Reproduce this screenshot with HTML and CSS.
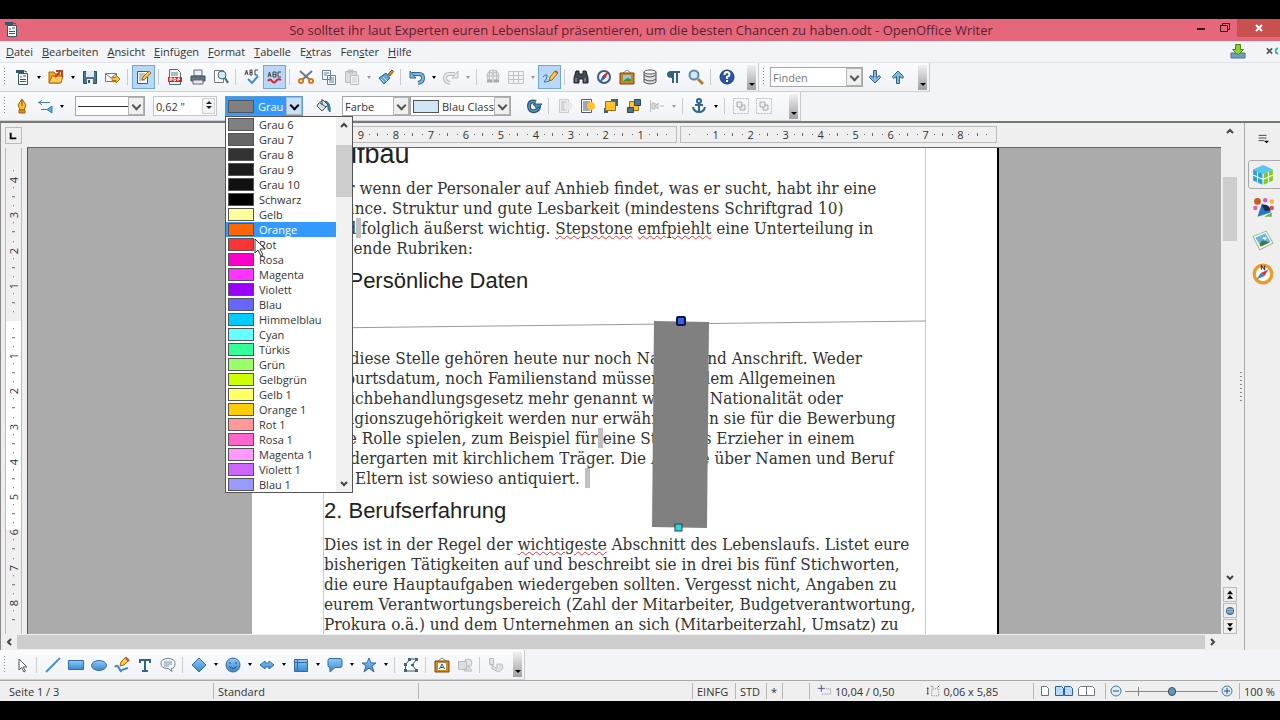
FILE: index.html
```
<!DOCTYPE html>
<html lang="de">

<head>
  <meta charset="utf-8">
  <title>OpenOffice Writer</title>
  <meta name="viewport" content="width=device-width, initial-scale=1.0">
  <link rel="stylesheet" href="styles.css">
</head>

<body>
  <svg class="defs" aria-hidden="true">
    <defs>
      <linearGradient id="blue" x1="0" y1="0" x2="0" y2="1">
        <stop offset="0" stop-color="#8ecbf5" />
        <stop offset="1" stop-color="#3d86cf" />
      </linearGradient>
      <symbol id="doc" viewBox="0 0 16 16">
        <path d="M2 1h8v3H2z" fill="#35566b" />
        <path d="M4.500 4.500h9v11h-9z" fill="#fff" stroke="#35566b" />
        <path d="M3 3q3-2 5 0q2-2 5 0M6 8h2M6 10.500h6M6 12.500h6M9 7h3" stroke="#35566b" fill="none" />
      </symbol>
      <symbol id="rotated" viewBox="0 0 16 16">
        <path d="M.5.500h15v15H.5z" fill="none" stroke="#bbb" stroke-dasharray="2 1" />
        <path d="M4 4h5v5H4zM8 7h4v5H7V9" fill="#eee" stroke="#aaa" />
      </symbol>
    </defs>
  </svg>

  <div class="window">
    <header class="titlebar">
      <svg class="app-icon" viewBox="0 0 16 16"><use href="#doc" /></svg>
      <h1>So solltet ihr laut Experten euren Lebenslauf präsentieren, um die besten Chancen zu haben.odt - OpenOffice Writer</h1>
      <div class="window-buttons">
        <button aria-label="Minimieren"><svg viewBox="0 0 16 16"><path d="M4 9h8" stroke="#3a1820" stroke-width="2" /></svg></button>
        <button aria-label="Verkleinern"><svg viewBox="0 0 16 16"><path d="M3.500 5.500h7v6h-7zM5.500 5V3.500h7v6h-2" fill="none" stroke="#3a1820" /></svg></button>
        <button class="close" aria-label="Schließen"><svg viewBox="0 0 16 16"><path d="M5 5l6 6M11 5l-6 6" stroke="#fff" stroke-width="2" /></svg></button>
      </div>
    </header>

    <nav class="menubar">
      <a href="#"><u>D</u>atei</a>
      <a href="#"><u>B</u>earbeiten</a>
      <a href="#"><u>A</u>nsicht</a>
      <a href="#"><u>E</u>infügen</a>
      <a href="#"><u>F</u>ormat</a>
      <a href="#"><u>T</u>abelle</a>
      <a href="#">E<u>x</u>tras</a>
      <a href="#">Fen<u>s</u>ter</a>
      <a href="#"><u>H</u>ilfe</a>
      <span class="spacer"></span>
      <button class="btn" aria-label="Update"><svg viewBox="0 0 16 16"><path d="M1 10h14v5H1z" fill="#6f9fc0" stroke="#47718f" /><path d="M5.500 1.500h5v5h3L8 12 2.500 6.500h3z" fill="#8ccf2e" stroke="#4d8a12" /></svg></button>
      <button class="doc-close" aria-label="Dokument schließen"><svg viewBox="0 0 16 16"><path d="M1 5l6 6M7 5l-6 6" stroke="#555" stroke-width="2" /><path d="M14 5q-3 0-3 3t3 3" stroke="#35b59a" fill="none" stroke-width="2" /></svg></button>
    </nav>

    <div class="toolbars">
      <div class="row">
        <div class="toolbar">
          <span class="grip"></span>
          <button class="btn" aria-label="Neu"><svg viewBox="0 0 16 16"><use href="#doc" /></svg></button>
          <button class="drop" aria-label="Neu Auswahl"></button>
          <button class="btn" aria-label="Öffnen"><svg viewBox="0 0 16 16"><path d="M1 14V3h5l1 2h5v9z" fill="#f5a71e" stroke="#a96a08" /><path d="M1 14l3-7h11l-2 7z" fill="#ffc95a" stroke="#a96a08" /><path d="M7 8l5-5M8 2h6v6" stroke="#c5431d" stroke-width="2" fill="none" /></svg></button>
          <button class="drop" aria-label="Öffnen Auswahl"></button>
          <button class="btn" aria-label="Speichern"><svg viewBox="0 0 16 16"><path d="M1.500 2.500h13v12h-13z" fill="#4c7290" stroke="#2c4d66" /><path d="M4 2h8v6H4z" fill="#dfe9ef" /><path d="M5 10h6v5H5z" fill="#eee" /><path d="M6 11h2v3H6z" fill="#35566b" /></svg></button>
          <button class="btn" aria-label="E-Mail"><svg viewBox="0 0 16 16"><path d="M.5 4.500h11v8H.5zM1 5l5 4 5-4" fill="#f7f7f7" stroke="#777" /><path d="M7 8.500h4V6l4 4-4 4v-2.500H7z" fill="#ffc23c" stroke="#b07410" /></svg></button>
          <span class="sep"></span>
          <button class="btn on" aria-label="Bearbeiten"><svg viewBox="0 0 16 16"><path d="M1.500 2.500h10v12h-10z" fill="#fff" stroke="#555" /><path d="M3 5h6M3 7h5M3 9h4M3 11h6" stroke="#688ca5" /><path d="M6 11l1-3 6-6 2 2-6 6z" fill="#ffc83d" stroke="#a06a10" /></svg></button>
          <span class="sep"></span>
          <button class="btn" aria-label="PDF"><svg viewBox="0 0 16 16"><path d="M2.500.500h8l3 3v12h-11z" fill="#f4f4f4" stroke="#556b7a" /><path d="M4 4h7M4 6h7" stroke="#68818f" /><path d="M1 8h14v5H1z" fill="#cc2525" /><path d="M3 12V9h2v2H3M7 9v3h1q2-1.500 0-3zM11 12V9h2M11 10.500h2" stroke="#fff" fill="none" /></svg></button>
          <button class="btn" aria-label="Drucken"><svg viewBox="0 0 16 16"><path d="M4 1h8v6H4z" fill="#e6f0f6" stroke="#667" /><path d="M1 7h14v5H1z" fill="#5e7380" stroke="#3e505b" /><path d="M3 11h10v4H3z" fill="#e9e9e9" stroke="#667" /></svg></button>
          <button class="btn" aria-label="Seitenansicht"><svg viewBox="0 0 16 16"><path d="M1.500 1.500h9v12h-9z" fill="#fff" stroke="#777" /><circle cx="9" cy="6" r="4" fill="#cfe7f6" stroke="#41657f" /><path d="M12 9l3 5" stroke="#41657f" stroke-width="2" /></svg></button>
          <span class="sep"></span>
          <button class="btn" aria-label="Rechtschreibung"><svg viewBox="0 0 16 16"><path d="M1 6l1.500-5L4 6M1.500 4h2M6 1v5h2V1zM6 3.500h2M14 1h-3v5h3" stroke="#444" fill="none" /><path d="M4 10l4 4 6-7" stroke="#3f8fd0" stroke-width="2" fill="none" /></svg></button>
          <button class="btn on" aria-label="AutoRechtschreibung"><svg viewBox="0 0 16 16"><path d="M1 8l1.500-5L4 8M1.500 6h2M6 3v5h3V3zM6 5.500h3M14 3h-3v5h3" stroke="#444" fill="none" /><path d="M1 12q2-3 4 0t4 0 5-1" stroke="#d6202a" stroke-width="2" fill="none" /></svg></button>
          <span class="sep"></span>
          <button class="btn" aria-label="Ausschneiden"><svg viewBox="0 0 16 16"><path d="M2 2l10 9M14 2L4 11" stroke="#6d7b83" stroke-width="2" /><circle cx="3" cy="12" r="2" fill="#fff" stroke="#d87813" stroke-width="2" /><circle cx="13" cy="12" r="2" fill="#fff" stroke="#d87813" stroke-width="2" /></svg></button>
          <button class="btn" aria-label="Kopieren"><svg viewBox="0 0 16 16"><path d="M1.500 1.500h8v9h-8zM6.500 6.500h8v9h-8z" fill="#f5f8fa" stroke="#67839a" /><path d="M3 4h5M3 6h3M8 9h5M8 11h5M8 13h5" stroke="#67839a" /></svg></button>
          <button class="btn" aria-label="Einfügen" disabled><svg viewBox="0 0 16 16"><path d="M1.500 2.500h11v11h-11zM4 1h5v3H4z" fill="#ddd" stroke="#bbb" /><path d="M6.500 6.500h8v9h-8z" fill="#f4f4f4" stroke="#bbb" /><path d="M8 9h5M8 11h5M8 13h5" stroke="#ccc" /></svg></button>
          <button class="drop off" aria-label="Einfügen Auswahl"></button>
          <button class="btn" aria-label="Format übertragen"><svg viewBox="0 0 16 16"><path d="M10 5l4-4 1.500 1.500L12 7z" fill="#d88b2c" stroke="#8a5415" /><path d="M1 9l7-5 4 5-6 6z" fill="#5aa6df" stroke="#2c6594" /><path d="M3 10l3 3M5 8l4 4" stroke="#c8e4f7" /></svg></button>
          <span class="sep"></span>
          <button class="btn" aria-label="Rückgängig"><svg viewBox="0 0 16 16"><path d="M3 5h7q4 0 4 4t-5 5" stroke="#2f6590" stroke-width="4" fill="none" /><path d="M3 5h7q4 0 4 4t-5 5" stroke="#7fb8e0" stroke-width="2" fill="none" /><path d="M1 2v7h6z" fill="#7fb8e0" stroke="#2f6590" /></svg></button>
          <button class="drop" aria-label="Rückgängig Auswahl"></button>
          <button class="btn" aria-label="Wiederherstellen" disabled><svg viewBox="0 0 16 16"><path d="M12 5H6q-4 0-4 4t5 5" stroke="#bbb" stroke-width="4" fill="none" /><path d="M12 5H6q-4 0-4 4t5 5" stroke="#e8e8e8" stroke-width="2" fill="none" /><path d="M15 2v7H9z" fill="#e8e8e8" stroke="#bbb" /></svg></button>
          <button class="drop off" aria-label="Wiederherstellen Auswahl"></button>
          <span class="sep"></span>
          <button class="btn" aria-label="Hyperlink" disabled><svg viewBox="0 0 16 16"><circle cx="8" cy="7" r="6" fill="#eee" stroke="#bbb" /><path d="M2 7h12M8 1v12M4 3q4 3 8 0M5 1q-2 6 0 12M11 1q2 6 0 12" stroke="#bbb" fill="none" /><path d="M2 12h5M9 12h5" stroke="#aaa" stroke-width="3" /></svg></button>
          <button class="btn" aria-label="Tabelle" disabled><svg viewBox="0 0 16 16"><path d="M.5 2.500h15v12H.5zM1 6.500h14M1 10.500h14M5.500 3v11M10.500 3v11" fill="#f3f3f3" stroke="#c4c4c4" /></svg></button>
          <button class="drop off" aria-label="Tabelle Auswahl"></button>
          <button class="btn on" aria-label="Zeichnen"><svg viewBox="0 0 16 16"><path d="M1 8q4-4 4-1t-3 6q3 0 5-1" stroke="#2d76ba" fill="none" /><path d="M7 12l1-4 5-6 3 2-6 7z" fill="#ffc83d" stroke="#a06a10" /><path d="M13 2l3 2" stroke="#d44" stroke-width="2" /></svg></button>
          <span class="sep"></span>
          <button class="btn" aria-label="Suchen"><svg viewBox="0 0 16 16"><path d="M3 2h3v3h4V2h3l2 7v5h-5v-4H6v4H1V9z" fill="#3f4a52" stroke="#222" /><path d="M3 9v4M12 9v4" stroke="#9ab" /></svg></button>
          <button class="btn" aria-label="Navigator"><svg viewBox="0 0 16 16"><circle cx="8" cy="8" r="6" fill="#f1f6fa" stroke="#3f5d78" stroke-width="2" /><path d="M12 3L9 9 7 7z" fill="#d3262c" stroke="#d3262c" /><path d="M4 13l3-6 2 2z" fill="#2f68b5" stroke="#2f68b5" /></svg></button>
          <button class="btn" aria-label="Gallery"><svg viewBox="0 0 16 16"><path d="M4 4l4-3 4 3" stroke="#888" fill="none" /><path d="M1 4h14v11H1z" fill="#c98423" stroke="#79490b" /><path d="M4 6h8v6H4z" fill="#8fc8ee" /><path d="M4 12l4-3 4 1v2z" fill="#4d8f2f" /></svg></button>
          <button class="btn" aria-label="Datenquellen"><svg viewBox="0 0 16 16"><path d="M2 3v10q6 4 12 0V3" fill="#e2e2e2" stroke="#555" /><ellipse cx="8" cy="3" rx="6" ry="2" fill="#fafafa" stroke="#555" /><path d="M2 6q6 4 12 0M2 10q6 4 12 0" stroke="#555" fill="none" /></svg></button>
          <button class="btn" aria-label="Steuerzeichen"><svg viewBox="0 0 16 16"><path d="M15 2H6Q2 2 2 5.500T7 9v5h2V4h2v10h2V4h2z" fill="#34627f" /></svg></button>
          <button class="btn" aria-label="Maßstab"><svg viewBox="0 0 16 16"><circle cx="6" cy="6" r="4.500" fill="#cfe9f8" stroke="#6389a5" stroke-width="2" /><path d="M10 10l5 5" stroke="#b87c28" stroke-width="3" /></svg></button>
          <span class="sep"></span>
          <button class="btn" aria-label="Hilfe"><svg viewBox="0 0 16 16"><circle cx="8" cy="8" r="7" fill="#2857a8" stroke="#16396f" /><path d="M5.500 6q0-3 2.500-3t2.500 2.500Q10.500 7 8 8v2M8 11v2" stroke="#fff" stroke-width="2" fill="none" /></svg></button>
          <button class="overflow" aria-label="Mehr"></button>
        </div>
        <div class="toolbar">
          <span class="grip"></span>
          <span class="combo find"><input type="text" placeholder="Finden" aria-label="Finden"><i class="chevron"></i></span>
          <button class="btn" aria-label="Weitersuchen"><svg viewBox="0 0 16 16"><path d="M6.500 1.500h3v7l3-2 1 2L8 14 2.500 8.500l1-2 3 2z" fill="#83bae3" stroke="#2f5f87" /></svg></button>
          <button class="btn" aria-label="Rückwärts suchen"><svg viewBox="0 0 16 16"><path d="M6.500 14.500h3v-7l3 2 1-2L8 2 2.500 7.500l1 2 3-2z" fill="#83bae3" stroke="#2f5f87" /></svg></button>
          <button class="overflow" aria-label="Mehr"></button>
        </div>
      </div>

      <div class="row">
        <div class="toolbar objects">
          <span class="grip"></span>
          <button class="btn" aria-label="Linie"><svg viewBox="0 0 16 16"><path d="M8 1l4 6-2 5H6L4 7z" fill="#ffc02e" stroke="#9c6208" /><path d="M8 2v6" stroke="#7d4e05" /><path d="M5 12h6v3H5z" fill="#f28a1a" stroke="#9c6208" /></svg></button>
          <button class="btn" aria-label="Linienenden"><svg viewBox="0 0 16 16"><path d="M1 4.500h12M5 2L2 4.500 5 7M4 11.500h8" stroke="#3d7cae" fill="none" /><path d="M15 8l-5 3.500 5 3.500z" fill="#6ba6d2" stroke="#3d7cae" /></svg></button>
          <button class="drop" aria-label="Linienenden Auswahl"></button>
          <span class="combo line-style"><select aria-label="Linienstil"><option></option></select><i class="stroke"></i><i class="chevron"></i></span>
          <span class="spin"><input type="text" value="0,62 &quot;" aria-label="Linienbreite"><i class="updown"></i></span>
          <div class="color-picker">
            <span class="combo active"><i class="swatch gray6"></i><select aria-label="Linienfarbe"><option>Grau</option></select><i class="chevron"></i></span>
            <div class="popup">
              <ul role="listbox" aria-label="Farben">
                <li><i class="swatch gray6"></i>Grau 6</li>
                <li><i class="swatch gray7"></i>Grau 7</li>
                <li><i class="swatch gray8"></i>Grau 8</li>
                <li><i class="swatch gray9"></i>Grau 9</li>
                <li><i class="swatch gray10"></i>Grau 10</li>
                <li><i class="swatch black"></i>Schwarz</li>
                <li><i class="swatch yellow"></i>Gelb</li>
                <li class="selected"><i class="swatch orange"></i>Orange</li>
                <li><i class="swatch red"></i>Rot</li>
                <li><i class="swatch pink"></i>Rosa</li>
                <li><i class="swatch magenta"></i>Magenta</li>
                <li><i class="swatch violet"></i>Violett</li>
                <li><i class="swatch blue"></i>Blau</li>
                <li><i class="swatch sky"></i>Himmelblau</li>
                <li><i class="swatch cyan"></i>Cyan</li>
                <li><i class="swatch turquoise"></i>Türkis</li>
                <li><i class="swatch green"></i>Grün</li>
                <li><i class="swatch lime"></i>Gelbgrün</li>
                <li><i class="swatch yellow1"></i>Gelb 1</li>
                <li><i class="swatch orange1"></i>Orange 1</li>
                <li><i class="swatch red1"></i>Rot 1</li>
                <li><i class="swatch pink1"></i>Rosa 1</li>
                <li><i class="swatch magenta1"></i>Magenta 1</li>
                <li><i class="swatch violet1"></i>Violett 1</li>
                <li><i class="swatch blue1"></i>Blau 1</li>
              </ul>
              <div class="popup-scroll">
                <svg viewBox="0 0 16 16"><path d="M5 10l3-3 3 3" /></svg>
                <i class="thumb"></i>
                <svg viewBox="0 0 16 16"><path d="M5 6l3 3 3-3" /></svg>
              </div>
              <svg class="cursor" viewBox="0 0 14 20"><path d="M1 1v14l3-3 3 6 2-1-3-6h5z" fill="#fff" stroke="#333" /></svg>
            </div>
          </div>
          <button class="btn fill" aria-label="Fläche"><svg viewBox="0 0 16 16"><path d="M3 6l5-4 5 5-6 6-5-5z" fill="#d9e1e6" stroke="#44525c" /><path d="M5 5l6 4M7 1v6" stroke="#44525c" fill="none" /><path d="M10 3q6 1 5 11-3-2-2-7z" fill="#3d86b9" stroke="#2f6a95" /></svg></button>
          <span class="combo fill-type"><select aria-label="Füllart"><option>Farbe</option></select><i class="chevron"></i></span>
          <span class="combo fill-color"><i class="swatch classic"></i><select aria-label="Füllfarbe"><option>Blau Class</option></select><i class="chevron"></i></span>
          <button class="btn rotate" aria-label="Drehen"><svg viewBox="0 0 16 16"><path d="M10 4Q3 2 3 8t6 5q4-1 4-5" stroke="#2e5b7d" stroke-width="4" fill="none" /><path d="M10 4Q3 2 3 8t6 5q4-1 4-5" stroke="#79aed2" stroke-width="1" fill="none" /><path d="M7 6h9l-5 5z" fill="#4f87ac" stroke="#2e5b7d" /></svg></button>
          <span class="sep"></span>
          <button class="btn" aria-label="Durchlauf" disabled><svg viewBox="0 0 16 16"><path d="M2.500 1.500h9v13h-9z" fill="#eee" stroke="#ccc" /><path d="M4 4h6M4 6h6M4 8h6M4 10h6M4 12h6" stroke="#bbb" /><circle cx="11" cy="8" r="4" fill="#e8e8e8" /></svg></button>
          <button class="btn" aria-label="Im Hintergrund"><svg viewBox="0 0 16 16"><path d="M1.500 1.500h10v13h-10z" fill="#fff" stroke="#557" /><path d="M3 4h7M3 6h7M3 8h7M3 10h7M3 12h7" stroke="#35566b" /><circle cx="11" cy="8" r="4" fill="#ffc329" /></svg></button>
          <button class="btn" aria-label="Nach vorn"><svg viewBox="0 0 16 16"><path d="M8 1h7v7H8z" fill="#3f6077" /><path d="M1 10h4v5H1z" fill="#3f6077" /><path d="M2.500 3.500h10v9h-10z" fill="#ffc12a" stroke="#a26c07" /></svg></button>
          <button class="btn" aria-label="Nach hinten"><svg viewBox="0 0 16 16"><path d="M3.500 3.500h9v9h-9z" fill="#ffc12a" stroke="#a26c07" /><path d="M8.500 1.500h6v6h-6zM1.500 9.500h6v5h-6z" fill="#4c7492" stroke="#29465a" /></svg></button>
          <button class="btn" aria-label="Ausrichtung" disabled><svg viewBox="0 0 16 16"><path d="M1.500 2v12M3 8h3M11 8h4M9 5l-3 3 3 3z" stroke="#bbb" fill="#ddd" /><path d="M3 5h3v6H3z" fill="#ddd" stroke="#bbb" /></svg></button>
          <button class="drop off" aria-label="Ausrichtung Auswahl"></button>
          <span class="sep"></span>
          <button class="btn" aria-label="Verankerung"><svg viewBox="0 0 16 16"><circle cx="8" cy="3" r="2" fill="none" stroke="#2d6391" stroke-width="2" /><path d="M8 5v9M4 7h8M2 9q1 5 6 5t6-5" stroke="#2d6391" stroke-width="2" fill="none" /></svg></button>
          <button class="drop" aria-label="Verankerung Auswahl"></button>
          <span class="sep"></span>
          <button class="btn" aria-label="Gruppierung aufheben" disabled><svg viewBox="0 0 16 16"><use href="#rotated" /></svg></button>
          <button class="btn" aria-label="Gruppieren" disabled><svg viewBox="0 0 16 16"><use href="#rotated" /></svg></button>
          <button class="overflow" aria-label="Mehr"></button>
        </div>
      </div>
    </div>

    <main class="workspace">
      <div class="editor">
        <div class="tab-corner"><button aria-label="Tabulator"><svg viewBox="0 0 16 16"><path d="M5 5v6h6" fill="none" stroke="#000" stroke-width="2" /></svg></button></div>
        <div class="ruler">
          <div class="scale">
            <div class="range left"><b>9</b><b>8</b><b>7</b><b>6</b><b>5</b><b>4</b><b>3</b><b>2</b><b>1</b><b class="half"></b></div>
            <div class="range right"><b class="half"></b><b>1</b><b>2</b><b>3</b><b>4</b><b>5</b><b>6</b><b>7</b><b>8</b><b class="half"></b></div>
          </div>
        </div>
        <div class="vruler">
          <b class="half"></b><b>4</b><b>3</b><b>2</b><b>1</b><b></b><b>1</b><b>2</b><b>3</b><b>4</b><b>5</b><b>6</b><b>7</b><b>8</b><b class="half"></b>
        </div>
        <div class="canvas">
          <article class="page">
            <div class="text">
              <h2>Aufbau</h2>
              <p>Nur wenn der Personaler auf Anhieb findet, was er sucht, habt ihr eine<br>
                Chance. Struktur und gute Lesbarkeit (mindestens Schriftgrad 10)<br>
                sind<mark>&nbsp;</mark>folglich äußerst wichtig. <s>Stepstone</s> <s>emfpiehlt</s> eine Unterteilung in<br>
                folgende Rubriken:</p>
              <h3>1. Persönliche Daten</h3>
              <p class="spaced">An diese Stelle gehören heute nur noch Namen und Anschrift. Weder<br>
                Geburtsdatum, noch Familienstand müssen laut dem Allgemeinen<br>
                Gleichbehandlungsgesetz mehr genannt werden. Nationalität oder<br>
                Religionszugehörigkeit werden nur erwähnt, wenn sie für die Bewerbung<br>
                eine Rolle spielen, zum Beispiel für<mark>&nbsp;</mark>eine Stelle als Erzieher in einem<br>
                Kindergarten mit kirchlichem Träger. Die Angabe über Namen und Beruf<br>
                der Eltern ist sowieso antiquiert. <mark>&nbsp;</mark></p>
              <h3>2. Berufserfahrung</h3>
              <p>Dies ist in der Regel der <s>wichtigeste</s> Abschnitt des Lebenslaufs. Listet eure<br>
                bisherigen Tätigkeiten auf und beschreibt sie in drei bis fünf Stichworten,<br>
                die eure Hauptaufgaben wiedergeben sollten. Vergesst nicht, Angaben zu<br>
                eurem Verantwortungsbereich (Zahl der Mitarbeiter, Budgetverantwortung,<br>
                Prokura o.ä.) und dem Unternehmen an sich (Mitarbeiterzahl, Umsatz) zu</p>
            </div>
            <svg class="drawing" viewBox="0 0 746 487">
              <path d="M72 180L674 173" stroke="#999" />
              <path d="M402 173l55 1-2 206-55-1z" fill="#808080" />
              <rect x="425" y="169" width="8" height="8" rx="1" fill="#3c5fe8" stroke="#0b1550" stroke-width="2" />
              <rect x="423" y="376" width="7" height="7" fill="#33d6d6" stroke="#17494d" />
            </svg>
          </article>
        </div>
        <div class="vscroll">
          <svg viewBox="0 0 16 16"><path d="M5 10l3-3 3 3" /></svg>
          <i class="thumb"></i>
          <span class="spacer"></span>
          <svg viewBox="0 0 16 16"><path d="M5 6l3 3 3-3" /></svg>
          <button aria-label="Vorige Seite"><svg viewBox="0 0 16 16"><path d="M8 2l4 5H4zM8 8l4 5H4z" fill="#000" /></svg></button>
          <button aria-label="Navigation"><svg viewBox="0 0 16 16"><circle cx="8" cy="8" r="5" fill="#6793b3" stroke="#365a74" /><path d="M4 6h8M4 9h8" stroke="#a9c9de" /></svg></button>
          <button aria-label="Nächste Seite"><svg viewBox="0 0 16 16"><path d="M4 3h8L8 8zM4 9h8l-4 5z" fill="#000" /></svg></button>
        </div>
        <div class="hscroll">
          <svg viewBox="0 0 16 16"><path d="M10 5L7 8l3 3" /></svg>
          <i class="thumb"></i>
          <svg viewBox="0 0 16 16"><path d="M6 5l3 3-3 3" /></svg>
        </div>
      </div>
      <div class="splitter"><i></i></div>
      <aside class="sidebar">
        <button class="settings" aria-label="Einstellungen"><svg viewBox="0 0 16 16"><path d="M3 5h9M3 8h9M3 11h6" stroke="#334" /><path d="M9 11h6l-3 3z" fill="#000" /></svg></button>
        <button class="deck current" aria-label="Eigenschaften"><svg viewBox="0 0 20 20"><path d="M1 5l9-4 9 4-9 4z" fill="#59c6ee" /><path d="M10 9l9-4v10l-9 4z" fill="#7fd01c" /><path d="M1 5l9 4v10l-9-4z" fill="#2aa0e0" /><path d="M1 10l9 4 9-4M5 7v10M15 7v10M10 9v10" stroke="#fff" fill="none" /></svg></button>
        <button class="deck" aria-label="Formatvorlagen"><svg viewBox="0 0 20 20"><circle cx="5" cy="4" r="3" fill="#d2571d" /><circle cx="12" cy="3" r="2" fill="#d856c7" /><circle cx="18" cy="4" r="2" fill="#f6b535" /><circle cx="3" cy="10" r="2" fill="#ee5da6" /><circle cx="18" cy="10" r="2" fill="#ea4a4a" /><path d="M5 18L9 6l7 3 1 5z" fill="#2876c4" /><path d="M9 8q5-3 8 4l-5 1z" fill="#15304e" /><path d="M11 18l7-4v4z" fill="#6cb738" /></svg></button>
        <button class="deck" aria-label="Gallery"><svg viewBox="0 0 20 20"><path d="M1 6l12-5 6 11-12 6z" fill="#fff" stroke="#9bbf87" /><path d="M3 7l9-4 5 8-9 4z" fill="#65b5e6" /><path d="M7 14q1-6 5-4t5 1l-9 4z" fill="#47783a" /><path d="M10 7l3 1" stroke="#fff" stroke-width="2" /></svg></button>
        <button class="deck" aria-label="Navigator"><svg viewBox="0 0 20 20"><circle cx="10" cy="10" r="8" fill="#fff" stroke="#ee9a26" stroke-width="3" /><path d="M8.500 6V2.500l3 3.500V2.500" stroke="#333" fill="none" /><path d="M15 6l-4 6-3-3z" fill="#d9343a" /><path d="M4 15l4-6 3 3z" fill="#3c83c4" /></svg></button>
      </aside>
    </main>

    <div class="row drawbar">
      <div class="toolbar">
        <span class="grip"></span>
        <button class="btn" aria-label="Auswahl"><svg viewBox="0 0 16 16"><path d="M5 2v11l2.500-2.500L10 15l1.500-1L9 10h4z" fill="#fff" stroke="#555" /></svg></button>
        <span class="sep"></span>
        <button class="btn" aria-label="Linie"><svg viewBox="0 0 16 16"><path d="M1 15L15 1" stroke="#4a92d4" stroke-width="2" /></svg></button>
        <button class="btn" aria-label="Rechteck"><svg viewBox="0 0 16 16"><path d="M.5 3.500h15v9H.5z" fill="url(#blue)" stroke="#2e6ba8" /></svg></button>
        <button class="btn" aria-label="Ellipse"><svg viewBox="0 0 16 16"><ellipse cx="8" cy="8.500" rx="7.500" ry="5" fill="url(#blue)" stroke="#2e6ba8" /></svg></button>
        <button class="btn" aria-label="Freihandlinie"><svg viewBox="0 0 16 16"><path d="M1 10q2-3 4 1t2 3 7-3" stroke="#3d86cf" stroke-width="2" fill="none" /><path d="M6 9l1-4 5-5 3 3-5 5z" fill="#ffc83d" stroke="#a06a10" /><path d="M12 1l3 3" stroke="#d44" stroke-width="2" /></svg></button>
        <button class="btn" aria-label="Text"><svg viewBox="0 0 16 16"><path d="M3 6V3h10v3M8 3v11M5 14h6" stroke="#35627f" stroke-width="2" fill="none" /></svg></button>
        <button class="btn" aria-label="Legende"><svg viewBox="0 0 16 16"><path d="M8 1.500q7 0 7 5t-4 5l1 3-4-3q-7 0-7-5t7-5z" fill="#f3f6f8" stroke="#777f88" /><path d="M4 5h8M4 7h8M4 9h5" stroke="#6b94b0" /></svg></button>
        <span class="sep"></span>
        <button class="btn" aria-label="Standardformen"><svg viewBox="0 0 16 16"><path d="M8 1l7 7-7 7-7-7z" fill="url(#blue)" stroke="#2e6ba8" /></svg></button>
        <button class="drop" aria-label="Standardformen Auswahl"></button>
        <button class="btn" aria-label="Symbolformen"><svg viewBox="0 0 16 16"><circle cx="8" cy="8" r="7" fill="url(#blue)" stroke="#2e6ba8" /><path d="M5 5v2M11 5v2M4 9q4 5 8 0" stroke="#205084" fill="none" /></svg></button>
        <button class="drop" aria-label="Symbolformen Auswahl"></button>
        <button class="btn" aria-label="Blockpfeile"><svg viewBox="0 0 16 16"><path d="M1 8l5-4v2h4V4l5 4-5 4v-2H6v2z" fill="url(#blue)" stroke="#2e6ba8" /></svg></button>
        <button class="drop" aria-label="Blockpfeile Auswahl"></button>
        <button class="btn" aria-label="Flussdiagramme"><svg viewBox="0 0 16 16"><path d="M1.500 2.500h13v12h-13z" fill="url(#blue)" stroke="#2e6ba8" /><path d="M4.500 3v11M2 5.500h12" stroke="#2e6ba8" /></svg></button>
        <button class="drop" aria-label="Flussdiagramme Auswahl"></button>
        <button class="btn" aria-label="Legenden"><svg viewBox="0 0 16 16"><path d="M3 1.500h10q2 0 2 2v5q0 2-2 2H8L3 15v-4.500q-2 0-2-2v-5q0-2 2-2z" fill="url(#blue)" stroke="#2e6ba8" /></svg></button>
        <button class="drop" aria-label="Legenden Auswahl"></button>
        <button class="btn" aria-label="Sterne"><svg viewBox="0 0 16 16"><path d="M8 1l2 5h5l-4 3 2 6-5-4-5 4 2-6-4-3h5z" fill="url(#blue)" stroke="#2e6ba8" /></svg></button>
        <button class="drop" aria-label="Sterne Auswahl"></button>
        <span class="sep"></span>
        <button class="btn" aria-label="Punkte"><svg viewBox="0 0 16 16"><path d="M2 14l1-7 4-5h7L9 8l5 6z" fill="none" stroke="#456" /><path d="M1 12h3v3H1zM5 1h3v3H5zM12 1h3v3h-3zM12 12h3v3h-3zM1 6h3v3H1zM8 7h3v2H8z" fill="#3d6680" /></svg></button>
        <span class="sep"></span>
        <button class="btn" aria-label="Fontwork"><svg viewBox="0 0 16 16"><path d="M4 4l4-3 4 3" stroke="#888" fill="none" /><path d="M1 4h14v11H1z" fill="#d08a27" stroke="#79490b" /><path d="M4 6h8v7H4z" fill="#fff" /><path d="M5.500 12L8 7l2.500 5M6.500 10.500h3" stroke="#28527c" stroke-width="1" fill="none" /></svg></button>
        <button class="btn" aria-label="Aus Datei" disabled><svg viewBox="0 0 16 16"><circle cx="11" cy="6" r="4" fill="#e6e6e6" stroke="#bbb" /><path d="M1.500 4.500h8v8h-8zM11 8l4 6H7z" fill="#ddd" stroke="#bbb" /></svg></button>
        <span class="sep"></span>
        <button class="btn" aria-label="Extrusion" disabled><svg viewBox="0 0 16 16"><path d="M1.500 1.500h4v6h-4zM4 8l5 4V7h5l1 4-4 4-7-3z" fill="#e2e2e2" stroke="#bbb" /></svg></button>
        <button class="overflow" aria-label="Mehr"></button>
      </div>
    </div>

    <footer class="statusbar">
      <span class="cell">Seite 1 / 3</span>
      <span class="cell">Standard</span>
      <span class="cell"></span>
      <span class="cell">EINFG</span>
      <span class="cell">STD</span>
      <span class="cell">*</span>
      <span class="cell"></span>
      <span class="cell metrics">
        <svg viewBox="0 0 16 16"><path d="M1 5h8M5 1v8" stroke="#4444b5" /><path d="M5.500 11.500h10v-6h-5" fill="none" stroke="#777" stroke-dasharray="1 1" /></svg><span>10,04 / 0,50</span>
        <svg viewBox="0 0 16 16"><path d="M2 4v8M1 5h2M1 11h2M6 2l2 2M15 2l-2 2" stroke="#333" /><path d="M6.500 5.500h8v8h-8z" fill="none" stroke="#777" stroke-dasharray="1 1" /></svg><span>0,06 x 5,85</span>
      </span>
      <span class="cell views">
        <svg viewBox="0 0 10 12"><path d="M1.500 1.500h5l2 2v7h-7z" fill="#fff" stroke="#5d7285" /></svg>
        <svg class="wide" viewBox="0 0 18 12"><path d="M.5 1.500h6l2 2v7h-8zM9.500 1.500h6l2 2v7h-8z" fill="#b9d9f5" stroke="#2b5f95" /></svg>
        <svg class="wide" viewBox="0 0 18 12"><path d="M2.500 1.500h6v9h-8v-7zM8.500 1.500h6l2 2v7h-8z" fill="#fff" stroke="#6c7b88" /></svg>
      </span>
      <span class="cell zoom">
        <button aria-label="Verkleinern"><svg viewBox="0 0 12 12"><circle cx="6" cy="6" r="5" fill="#dcecf8" stroke="#4c7798" /><path d="M3 6h6" stroke="#24506f" /></svg></button>
        <input type="range" min="0" max="100" value="50" aria-label="Zoom">
        <button aria-label="Vergrößern"><svg viewBox="0 0 12 12"><circle cx="6" cy="6" r="5" fill="#dcecf8" stroke="#4c7798" /><path d="M3 6h6M6 3v6" stroke="#24506f" /></svg></button>
      </span>
      <span class="cell">100 %</span>
    </footer>
  </div>
</body>

</html>
```
FILE: styles.css
```
* {
  box-sizing: border-box;
}

body {
  margin: 0;
  background: #000;
  color: #333;
  font-family: "Segoe UI", "Open Sans", sans-serif;
  font-size: 11px;
}

button {
  border: 0;
  padding: 0;
  background: none;
}

.defs {
  position: absolute;
  width: 0;
  height: 0;
}

.window {
  display: flex;
  flex-direction: column;
  height: 100vh;
  border: solid #000;
  border-width: 19px 0;
  background: #f2f4f8;
  overflow: hidden;
}

.spacer {
  flex: 1;
}

/* title and menu */
.titlebar {
  display: flex;
  flex: none;
  height: 22px;
  background: #e6667c;
}

.app-icon {
  width: 16px;
  height: 16px;
  margin: 2px 0 0 3px;
}

.titlebar h1 {
  flex: 1;
  margin: 0;
  padding-left: 74px;
  color: #56242e;
  font-size: 13px;
  font-weight: normal;
  line-height: 22px;
  text-align: center;
  white-space: nowrap;
}

.window-buttons {
  display: flex;
  align-items: flex-start;
}

.window-buttons button {
  width: 24px;
  height: 18px;
}

.window-buttons svg {
  display: block;
  width: 16px;
  height: 16px;
  margin: auto;
}

.window-buttons .close {
  width: 43px;
  background: #c8504f;
}

.menubar {
  display: flex;
  flex: none;
  align-items: center;
  gap: 9px;
  height: 22px;
  padding-left: 6px;
  padding-bottom: 1px;
  border-bottom: 1px solid #dfe2e6;
}

.menubar a {
  color: #333;
  text-decoration: none;
}

.doc-close {
  margin-left: 8px;
}

.doc-close svg {
  display: block;
  width: 14px;
  height: 14px;
}

/* toolbars */
.toolbars {
  flex: none;
  border-bottom: 2px solid #777;
}

.row {
  display: flex;
  height: 29px;
}

.toolbar {
  display: flex;
  align-items: center;
  height: 29px;
  border-right: 1px solid #c8cace;
  border-bottom: 1px solid #cdd0d4;
  background: linear-gradient(#fafbfc, #f0f2f6);
}

.grip {
  flex: none;
  width: 1px;
  height: 18px;
  margin: 0 5px 0 4px;
  background: repeating-linear-gradient(#888 0 1px, transparent 1px 3px);
}

.btn {
  flex: none;
  width: 23px;
  height: 24px;
}

.btn svg {
  display: block;
  width: 16px;
  height: 16px;
  margin: auto;
}

.btn.on {
  border: 1px solid #6fa8e0;
  background: #b9d7f7;
}

.drop {
  flex: none;
  width: 11px;
  height: 24px;
}

.drop::after,
.overflow::after {
  content: "";
  display: block;
  width: 0;
  margin: 0 auto;
  border: 3px solid transparent;
  border-top-color: #000;
  border-bottom: 0;
}

.drop::after {
  border-width: 3px 2px 0;
}

.drop.off::after {
  border-top-color: #999;
}

.sep {
  flex: none;
  width: 1px;
  height: 16px;
  margin: 0 4px 0 3px;
  background: #c9ccd0;
}

.overflow {
  display: flex;
  flex: none;
  align-items: flex-end;
  width: 9px;
  height: 25px;
  margin: 0 2px 0 9px;
  padding-bottom: 4px;
  background: linear-gradient(#f0f0f0, #a0a0a0);
}

.combo {
  position: relative;
  display: flex;
  align-items: center;
  height: 20px;
  border: 1px solid #a4a6a9;
  background: #fff;
}

.combo select,
.combo input,
.spin input {
  flex: 1;
  width: 0;
  height: 18px;
  padding: 0 2px;
  border: 0;
  outline: 0;
  appearance: none;
  background: none;
  color: #333;
  font: inherit;
}

.combo input::placeholder {
  color: #777;
}

.chevron {
  flex: none;
  width: 16px;
  height: 18px;
  border: 1px solid #b4b4b4;
  background: #efefef;
}

.chevron::after {
  content: "";
  display: block;
  width: 5px;
  height: 5px;
  margin: 4px auto 0;
  border: solid #555;
  border-width: 0 2px 2px 0;
  transform: rotate(45deg);
}

.find {
  width: 93px;
  margin-left: 1px;
}

.line-style {
  width: 70px;
  margin-left: 8px;
}

.stroke {
  position: absolute;
  left: 2px;
  width: 50px;
  border-top: 1px solid #333;
}

.spin {
  display: flex;
  align-items: center;
  width: 64px;
  height: 20px;
  margin-left: 8px;
  border: 1px solid #c4c6c9;
  background: #fff;
}

.updown {
  width: 13px;
  height: 16px;
  margin-right: 1px;
  border: 1px solid #ccc;
  background: #f3f3f3;
}

.updown::before,
.updown::after {
  content: "";
  display: block;
  width: 0;
  margin: 2px auto;
  border: 3px solid transparent;
  border-top: 0;
  border-bottom-color: #222;
}

.updown::after {
  border-top: 3px solid #222;
  border-bottom: 0;
}

.color-picker {
  position: relative;
  margin-left: 8px;
}

.color-picker .combo {
  width: 78px;
  padding-left: 2px;
  border-color: #5e9ad2;
  background: #3399ff;
}

.color-picker select {
  color: #fff;
  padding-left: 4px;
  padding-right: 0;
}

.active .chevron {
  background: #c7e0f8;
}

.active .chevron::after {
  border-color: #000;
}

.fill {
  margin: 0 8px;
}

.fill-type {
  width: 68px;
}

.fill-color {
  width: 101px;
  padding-left: 2px;
}

.fill-color select {
  padding: 0 0 0 3px;
}

.rotate {
  margin-left: 11px;
}

.objects .overflow {
  margin-left: 14px;
}

/* colour list, drops over the document */
.popup {
  position: absolute;
  top: 20px;
  left: 0;
  z-index: 2;
  display: flex;
  width: 128px;
  border: 1px solid #555;
  background: #fff;
}

.popup ul {
  flex: 1;
  margin: 0;
  padding: 0;
  list-style: none;
}

.popup li {
  display: flex;
  align-items: center;
  gap: 5px;
  height: 15px;
  padding-left: 2px;
  line-height: 15px;
  white-space: nowrap;
}

.popup .selected {
  background: #3399ff;
  color: #fff;
}

.popup-scroll {
  display: flex;
  flex-direction: column;
  justify-content: space-between;
  width: 16px;
  background: #f0f0f0;
}

.popup-scroll svg,
.vscroll > svg,
.hscroll > svg {
  display: block;
  flex: none;
  width: 16px;
  height: 16px;
  fill: none;
  stroke: #444;
  stroke-width: 2;
}

.thumb {
  background: #cdcdcd;
}

.popup-scroll .thumb {
  height: 52px;
  margin: 12px 0 auto;
}

.cursor {
  position: absolute;
  top: 121px;
  left: 28px;
  width: 14px;
  height: 20px;
}

.swatch {
  flex: none;
  width: 26px;
  height: 13px;
  border: 1px solid #555;
}

.gray6 { background: #808080; }
.gray7 { background: #666; }
.gray8 { background: #333; }
.gray9 { background: #1c1c1c; }
.gray10 { background: #111; }
.black { background: #000; }
.yellow { background: #ff9; }
.orange { background: #f60; }
.red { background: #f33; }
.pink { background: #f0c; }
.magenta { background: #f3f; }
.violet { background: #90f; }
.blue { background: #66f; }
.sky { background: #0cf; }
.cyan { background: #6ff; }
.turquoise { background: #3f9; }
.green { background: #9f6; }
.lime { background: #cf0; }
.yellow1 { background: #ff6; }
.orange1 { background: #fc0; }
.red1 { background: #f99; }
.pink1 { background: #f6c; }
.magenta1 { background: #f9f; }
.violet1 { background: #c6f; }
.blue1 { background: #99f; }
.classic { background: #cfe7f5; }

/* document area */
.workspace {
  display: flex;
  flex: 1;
  min-height: 0;
  background: #efefef;
}

.editor {
  display: grid;
  flex: 1;
  grid-template-columns: 26px 1fr 17px;
  grid-template-rows: 25px 1fr 16px;
  min-width: 0;
  border-left: 1px solid #888;
}

.tab-corner button {
  width: 17px;
  height: 17px;
  margin: 4px;
  border: 1px solid #bbb;
}

.tab-corner svg {
  display: block;
}

.ruler {
  padding-top: 3px;
  border-bottom: 1px solid #666;
}

.scale {
  display: flex;
  gap: 3px;
  width: 745px;
  margin: 0 auto;
  padding-left: 91px;
}

.range {
  display: flex;
  height: 17px;
  border: 1px solid #bbb;
  line-height: 15px;
  text-align: center;
}

.range.left {
  flex: 19;
}

.range.right {
  flex: 18;
}

.ruler b,
.vruler b {
  flex: 1;
  background:
    linear-gradient(#666, #666) 25% 50% / 1px 1px,
    linear-gradient(#666, #666) 75% 50% / 1px 1px,
    linear-gradient(#666, #666) 100% 50% / 1px 3px;
  background-repeat: no-repeat;
  font-weight: normal;
}

.ruler .half {
  flex: .5;
  background: linear-gradient(#666, #666) 50% 50% / 1px 1px no-repeat;
}

.vruler {
  display: flex;
  flex-direction: column;
  min-height: 0;
  width: 17px;
  margin-left: 4px;
  border: solid #bbb;
  border-width: 0 1px;
  background: linear-gradient(#fff, #fff) 0 173px / 100% 209px no-repeat;
}

.vruler b {
  min-height: 0;
  background:
    linear-gradient(#666, #666) 50% 25% / 1px 1px,
    linear-gradient(#666, #666) 50% 75% / 1px 1px,
    linear-gradient(#666, #666) 50% 0 / 3px 1px;
  background-repeat: no-repeat;
  line-height: 15px;
  text-align: center;
  transform: rotate(180deg);
  writing-mode: vertical-rl;
}

.vruler .half {
  flex: .4;
  background: none;
}

.canvas {
  min-height: 0;
  border-left: 1px solid #555;
  background: #ababab;
  overflow: hidden;
}

.page {
  position: relative;
  width: 745px;
  height: 100%;
  margin: 0 auto;
  padding: 0 71px;
  background: #fff;
  box-shadow: 2px 0 0 #000;
  overflow: hidden;
}

.text {
  display: flow-root;
  height: 100%;
  border: solid #ccc;
  border-width: 0 1px;
  color: #333;
  font-family: Georgia, "DejaVu Serif Condensed", "Liberation Serif", serif;
  font-size: 17px;
  line-height: 20px;
  white-space: nowrap;
}

.text h2,
.text h3 {
  margin: 0;
  color: #222;
  font-family: "Liberation Sans", sans-serif;
  font-size: 22px;
  font-weight: normal;
  line-height: 28px;
}

.text h2 {
  margin: -8px 0 10px;
  font-size: 27px;
}

.text p {
  margin: 0 0 9px;
}

.text h3 + p {
  margin-top: 9px;
}

.text p.spaced {
  margin: 53px 0 9px;
}

.text s {
  text-decoration: underline wavy #e03030 1px;
}

.text mark {
  background: #c0c0c0;
}

.drawing {
  position: absolute;
  top: 0;
  left: 0;
  width: 746px;
  height: 487px;
}

.vscroll {
  display: flex;
  flex-direction: column;
  grid-column: 3;
  grid-row: 1 / 4;
  align-items: center;
  padding-bottom: 16px;
}

.vscroll .thumb {
  width: 14px;
  height: 64px;
  margin-top: 38px;
}

.vscroll button {
  width: 14px;
  height: 15px;
  margin-top: 1px;
  border: 1px solid #bbb;
}

.vscroll button svg {
  display: block;
}

.hscroll {
  display: flex;
  grid-column: 1 / 3;
  grid-row: 3;
}

.hscroll .thumb {
  flex: 1;
  height: 14px;
  margin-top: 1px;
}

.splitter {
  display: flex;
  align-items: center;
  width: 7px;
  border-right: 1px solid #aaa;
}

.splitter i {
  width: 2px;
  height: 30px;
  margin-left: 2px;
  background: repeating-linear-gradient(#888 0 1px, transparent 1px 4px);
}

.sidebar {
  width: 35px;
  padding: 8px 0 0 3px;
  overflow: hidden;
}

.sidebar button {
  display: block;
}

.settings {
  margin-left: 8px;
}

.settings svg {
  width: 14px;
  height: 14px;
}

.deck {
  width: 38px;
  height: 29px;
  margin-top: 4px;
  border: 1px solid transparent;
  border-radius: 3px;
}

.settings + .deck {
  margin-top: 12px;
}

.deck.current {
  border-color: #aaa;
}

.deck svg {
  display: block;
  width: 22px;
  height: 22px;
  margin-left: 3px;
}

.drawbar {
  flex: none;
  height: 31px;
  border-bottom: 1px solid #aaa;
}

.drawbar .toolbar {
  height: 30px;
}

.drawbar .overflow {
  margin-left: 6px;
}

/* status bar */
.statusbar {
  display: grid;
  flex: none;
  grid-template-columns: 213px 205px 1fr 43px 31px 16px 27px 224px 72px 134px 41px;
  align-items: center;
  height: 20px;
  background: #efefef;
}

.cell {
  display: flex;
  align-items: center;
  height: 16px;
  padding-left: 4px;
  border-left: 1px solid #b5b5b5;
  white-space: nowrap;
}

.cell:first-child {
  padding-left: 9px;
  border-left: 0;
}

.metrics {
  padding-left: 6px;
}

.metrics span {
  flex: 1;
}

.metrics svg {
  width: 16px;
  height: 14px;
  margin-right: 3px;
}

.views {
  gap: 5px;
  padding-left: 6px;
}

.views svg {
  width: 10px;
  height: 12px;
}

.views .wide {
  width: 18px;
}

.zoom {
  gap: 3px;
  padding-right: 6px;
}

.zoom svg {
  display: block;
  width: 12px;
  height: 12px;
}

.zoom input {
  flex: 1;
  min-width: 0;
  height: 12px;
  margin: 0;
  appearance: none;
  background:
    linear-gradient(#888, #888) 14% 50% / 1px 9px,
    linear-gradient(#888, #888) 0 50% / 100% 1px;
  background-repeat: no-repeat;
}

.zoom input::-webkit-slider-thumb {
  width: 8px;
  height: 9px;
  border: 1px solid #2c5270;
  border-radius: 4px;
  appearance: none;
  background: #6b94b5;
}
```
